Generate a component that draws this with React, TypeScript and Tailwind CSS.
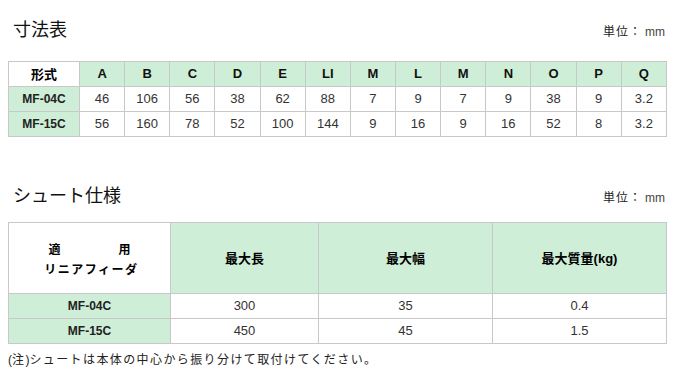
import React from "react";

const font = { fontFamily: '"Liberation Sans", Arial, "Noto Sans CJK JP", sans-serif' };

const cols = ["A", "B", "C", "D", "E", "LI", "M", "L", "M", "N", "O", "P", "Q"];
const rows1: [string, string[]][] = [
  ["MF-04C", ["46", "106", "56", "38", "62", "88", "7", "9", "7", "9", "38", "9", "3.2"]],
  ["MF-15C", ["56", "160", "78", "52", "100", "144", "9", "16", "9", "16", "52", "8", "3.2"]],
];

const rows2: [string, string, string, string][] = [
  ["MF-04C", "300", "35", "0.4"],
  ["MF-15C", "450", "45", "1.5"],
];

function TitleRow({ title }: { title: string }) {
  return (
    <div className="flex items-baseline justify-between pl-[5px] pr-[2px]">
      <div className="text-[18px] leading-[20px] text-[#111]" style={{ fontFamily: '"Noto Sans CJK JP", sans-serif' }}>
        {title}
      </div>
      <div className="text-[12px] leading-[16px] text-[#222]" style={font}>
        <span className="tracking-[1px]" style={{ fontFamily: '"Noto Sans CJK JP", sans-serif' }}>単位：</span>
        <span className="text-[#444] pl-[3px]">mm</span>
      </div>
    </div>
  );
}

export default function App() {
  return (
    <div className="w-[675px] h-[372px] bg-white px-2 overflow-hidden" style={font}>
      <div className="h-[61px] pt-[18px]">
        <TitleRow title="寸法表" />
      </div>
      <table className="w-[659px] table-fixed border-collapse text-center">
        <colgroup>
          <col className="w-[71px]" />
          {cols.map((_, i) => (
            <col key={i} />
          ))}
        </colgroup>
        <thead>
          <tr className="h-[25px]">
            <th className="border border-[#c8c8c8] bg-white text-[13px] font-bold text-black p-0" style={{ fontFamily: '"Noto Sans CJK JP", sans-serif' }}>
              形式
            </th>
            {cols.map((c, i) => (
              <th key={i} className="border border-[#c8c8c8] bg-[#cfeed7] text-[13px] font-bold text-[#111] p-0">
                {c}
              </th>
            ))}
          </tr>
        </thead>
        <tbody>
          {rows1.map(([name, vals]) => (
            <tr key={name} className="h-[25px]">
              <td className="border border-[#c8c8c8] bg-[#cfeed7] text-[12px] font-bold text-[#222] p-0">{name}</td>
              {vals.map((v, i) => (
                <td key={i} className="border border-[#c8c8c8] text-[13px] text-[#333] p-0">
                  {v}
                </td>
              ))}
            </tr>
          ))}
        </tbody>
      </table>

      <div className="h-[85px] pt-[47px]">
        <TitleRow title="シュート仕様" />
      </div>

      <table className="w-[659px] table-fixed border-collapse text-center">
        <colgroup>
          <col className="w-[162px]" />
          <col className="w-[148px]" />
          <col className="w-[174px]" />
          <col />
        </colgroup>
        <thead>
          <tr className="h-[71px]">
            <th className="border border-[#c8c8c8] bg-white p-0 text-[12px] font-bold text-black" style={{ fontFamily: '"Noto Sans CJK JP", sans-serif' }}>
              <div className="flex flex-col items-center leading-[20px] pt-[2px]">
                <div className="flex w-[82px] justify-between">
                  <span>適</span>
                  <span>用</span>
                </div>
                <div className="tracking-[1.5px] pl-[4px]">リニアフィーダ</div>
              </div>
            </th>
            <th className="border border-[#c8c8c8] bg-[#cfeed7] p-0 text-[13px] font-bold text-black" style={{ fontFamily: '"Noto Sans CJK JP", sans-serif' }}>
              最大長
            </th>
            <th className="border border-[#c8c8c8] bg-[#cfeed7] p-0 text-[13px] font-bold text-black" style={{ fontFamily: '"Noto Sans CJK JP", sans-serif' }}>
              最大幅
            </th>
            <th className="border border-[#c8c8c8] bg-[#cfeed7] p-0 text-[13px] font-bold text-black">
              <span style={{ fontFamily: '"Noto Sans CJK JP", sans-serif' }}>最大質量</span>
              <span style={font}>(kg)</span>
            </th>
          </tr>
        </thead>
        <tbody>
          {rows2.map(([name, a, b, c]) => (
            <tr key={name} className="h-[25px]">
              <td className="border border-[#c8c8c8] bg-[#cfeed7] text-[12px] font-bold text-[#222] p-0">{name}</td>
              <td className="border border-[#c8c8c8] text-[13px] text-[#333] p-0">{a}</td>
              <td className="border border-[#c8c8c8] text-[13px] text-[#333] p-0">{b}</td>
              <td className="border border-[#c8c8c8] text-[13px] text-[#333] p-0">{c}</td>
            </tr>
          ))}
        </tbody>
      </table>

      <div className="pt-[7px] text-[12px] leading-[16px] text-[#222] tracking-[1.4px]" style={{ fontFamily: '"Noto Sans CJK JP", sans-serif' }}>
        <span className="tracking-normal" style={font}>(</span>注<span className="tracking-normal" style={font}>)</span>シュートは本体の中心から振り分けて取付けてください。
      </div>
    </div>
  );
}
